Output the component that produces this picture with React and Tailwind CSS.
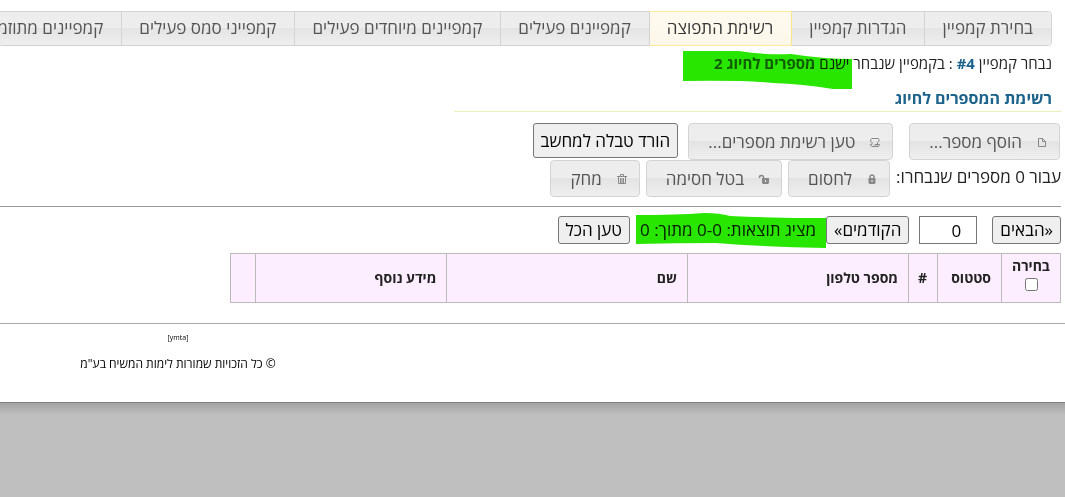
import React from 'react';

const TABS = [
  'בחירת קמפיין',
  'הגדרות קמפיין',
  'רשימת התפוצה',
  'קמפיינים פעילים',
  'קמפיינים מיוחדים פעילים',
  'קמפייני סמס פעילים',
  'קמפיינים מתוזמנים',
];

const ACTIVE_TAB = 2;

const COLUMNS = [
  { label: 'סטטוס', width: 'w-16' },
  { label: '#', width: 'w-[29px]' },
  { label: 'מספר טלפון', width: 'w-[221px]' },
  { label: 'שם', width: '' },
  { label: 'מידע נוסף', width: 'w-[191px]' },
  { label: '', width: 'w-[25px]' },
];

function DocumentIcon() {
  return (
    <svg className="w-4 h-4 shrink-0" viewBox="0 0 16 16" fill="none" stroke="#888" aria-hidden="true">
      <path d="M4.5 4.5h4l3 3v5h-7z" />
      <path d="M8.5 4.5v3h3" />
    </svg>
  );
}

function ScriptIcon() {
  return (
    <svg className="w-4 h-4 shrink-0" viewBox="0 0 16 16" fill="none" stroke="#888" aria-hidden="true">
      <path d="M5 4.5h6.500l.5 1v1.500l-1.500 1.500v3l-1 1H4.500L3.500 11.500V10.500H5V8.500L3.500 7V5.500z" />
      <path d="M8 12.500v-2h4.500v1l-1 1H9" />
    </svg>
  );
}

function LockIcon() {
  return (
    <svg className="w-4 h-4 shrink-0" viewBox="0 0 16 16" aria-hidden="true">
      <path d="M6 8V6a2 2 0 0 1 4 0v2" fill="none" stroke="#888" strokeWidth="1.500" />
      <path d="M4.500 7h7v5l-1 1h-5l-1-1z" fill="#888" />
      <path d="M7.500 9h1v2h-1z" fill="#eee" />
    </svg>
  );
}

function UnlockIcon() {
  return (
    <svg className="w-4 h-4 shrink-0" viewBox="0 0 16 16" aria-hidden="true">
      <path d="M3.500 7V6a2 1.500 0 0 1 4 0v2" fill="none" stroke="#888" strokeWidth="1.500" />
      <path d="M6 7h7v5l-1 1H7l-1-1z" fill="#888" />
      <path d="M9 9h1v2H9z" fill="#eee" />
    </svg>
  );
}

function TrashIcon() {
  return (
    <svg className="w-4 h-4 shrink-0" viewBox="0 0 16 16" fill="none" stroke="#888" aria-hidden="true">
      <path d="M3 5.500h10M6.500 5V3.500h3V5M4.500 6v6.500h7V6M6.500 7v5M8 7v5M9.500 7v5" />
    </svg>
  );
}

function ToolButton({ icon, children }) {
  return (
    <button
      type="button"
      className="flex h-[37px] items-center gap-3 rounded border border-[#d3d3d3] bg-linear-to-b from-[#ededed] from-50% via-[#e3e3e3] via-50% to-[#efefef] pr-[9px] pl-[19px] text-[17px] text-[#555]"
    >
      {icon}
      <span>{children}</span>
    </button>
  );
}

function PlainButton({ className, children }) {
  return (
    <button
      type="button"
      className={`rounded-[3px] border border-[#767676] bg-[#efefef] px-[7px] text-[17px] text-black ${className}`}
    >
      {children}
    </button>
  );
}

export default function App() {
  return (
    <div
      dir="rtl"
      className="min-h-screen overflow-hidden bg-[#bfbfbf] text-[#222]"
      style={{ fontFamily: '"Open Sans", "Noto Sans", "DejaVu Sans", sans-serif' }}
    >
      <div className="isolate border-b border-[#808080] bg-white pt-[11px] pb-[30px]">
        <nav className="mr-[13px] flex h-[35px] rounded-r border border-[#d3d3d3]">
          {TABS.map((tab, i) => (
            <a
              key={tab}
              href="#"
              className={
                i === ACTIVE_TAB
                  ? '-my-px -mr-px flex shrink-0 items-center border-y border-r border-l border-y-[#fbeb9b] border-r-[#fae68a] border-l-[#d3d3d3] bg-linear-to-b from-[#fffaf0] to-[#fbf8ea] pr-[18px] pb-px pl-[17px] text-[17px] text-[#363636]'
                  : 'flex shrink-0 items-center border-l border-[#d3d3d3] bg-linear-to-b from-[#ededed] from-50% via-[#e4e4e4] via-50% to-[#efefef] pr-[18px] pb-px pl-[17px] text-[17px] text-[#555] first:rounded-r'
              }
            >
              {tab}
            </a>
          ))}
        </nav>

        <p className="mt-1.5 mr-[13px] text-[15px] leading-[22px]">
          נבחר קמפיין <b className="text-[#1c638c]">#4</b> : בקמפיין שנבחר{' '}
          <span className="relative">
            ישנם <b className="text-[#666]">מספרים לחיוג 2</b>
            <svg
              className="pointer-events-none absolute -top-0.5 -left-[31px] h-10 w-[170px] mix-blend-multiply"
              viewBox="0 0 170 40"
              aria-hidden="true"
            >
              <path d="M0 0H56Q80 4 108 3Q140 8 169 8V38H150Q120 33 90 32Q60 29 0 30Z" fill="#28e600" />
            </svg>
          </span>
        </p>

        <h1 className="mt-3 mr-1 w-[57%] border-b border-[#eeeebb] pr-[9px] pb-px text-base leading-6 font-bold text-[#1c638c]">
          רשימת המספרים לחיוג
        </h1>

        <div className="mt-[11px] mr-[5px] flex items-start">
          <ToolButton icon={<DocumentIcon />}>הוסף מספר...</ToolButton>
          <div className="mr-4">
            <ToolButton icon={<ScriptIcon />}>טען רשימת מספרים...</ToolButton>
          </div>
          <PlainButton className="mr-2.5 h-[35px]">הורד טבלה למחשב</PlainButton>
        </div>

        <div className="mr-1 flex items-center gap-1.5">
          <span className="pb-1 text-[17px] leading-6">עבור 0 מספרים שנבחרו:</span>
          <ToolButton icon={<LockIcon />}>לחסום</ToolButton>
          <ToolButton icon={<UnlockIcon />}>בטל חסימה</ToolButton>
          <ToolButton icon={<TrashIcon />}>מחק</ToolButton>
        </div>

        <hr className="mt-[9px] mr-1 border-[#999]" />

        <div className="mt-[9px] mr-1 flex items-center">
          <PlainButton className="h-7">«הבאים</PlainButton>
          <input
            type="text"
            defaultValue="0"
            aria-label="מספר עמוד"
            className="mr-[15px] h-7 w-[58px] border border-[#767676] bg-white pr-[15px] pl-1 text-[17px] text-black"
          />
          <PlainButton className="mr-2.5 h-7">הקודמים»</PlainButton>
          <span className="relative mr-2.5 text-[17px] leading-6">
            מציג תוצאות: 0-0 מתוך: 0
            <svg
              className="pointer-events-none absolute -top-[5px] -right-2.5 h-9 w-[190px] mix-blend-multiply"
              viewBox="0 0 190 36"
              aria-hidden="true"
            >
              <path d="M0 2Q40 2 68 0Q84 0 94 3Q140 5 190 5V35Q130 34 80 30Q40 30 0 31Z" fill="#28e600" />
            </svg>
          </span>
          <PlainButton className="mr-2.5 h-7">טען הכל</PlainButton>
        </div>

        <table className="mt-[9px] mr-1 h-[50px] w-[78%] table-fixed border-collapse bg-[#fdeeff] text-sm">
          <thead>
            <tr>
              <th className="w-[59px] border border-[#bbb] text-center">
                <label htmlFor="select-all" className="block leading-4">
                  בחירה
                </label>
                <input id="select-all" type="checkbox" className="mx-auto mt-1 mb-2 block size-[13px]" />
              </th>
              {COLUMNS.map((col) => (
                <th key={col.label} className={`border border-[#bbb] pr-2.5 text-right ${col.width}`}>
                  {col.label}
                </th>
              ))}
            </tr>
          </thead>
        </table>

        <footer className="mt-5 border-t border-[#aaa] pt-2 text-black">
          <div className="mr-auto w-[356px] text-center">
            <p className="text-[7px] leading-3">[ymta]</p>
            <p className="mt-3 text-xs leading-4">© כל הזכויות שמורות לימות המשיח בע"מ</p>
          </div>
        </footer>
      </div>
      <div className="h-3 bg-linear-to-b from-[#a3a3a3] to-[#bfbfbf]" />
    </div>
  );
}
